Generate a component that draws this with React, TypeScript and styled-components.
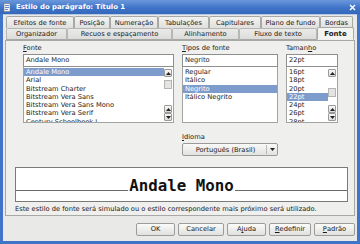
import styled, { createGlobalStyle } from 'styled-components'

const GlobalStyle = createGlobalStyle`
  html, body {
    margin: 0;
    padding: 0;
    background: #ffffff;
  }
  body {
    font-family: "DejaVu Sans", "Liberation Sans", sans-serif;
    font-size: 6.7px;
    color: #1a1a1a;
  }
`

const topTabs = [
  { label: 'Efeitos de fonte', width: 68 },
  { label: 'Posição', width: 36 },
  { label: 'Numeração', width: 48 },
  { label: 'Tabulações', width: 51 },
  { label: 'Capitulares', width: 52 },
  { label: 'Plano de fundo', width: 59 },
  { label: 'Bordas', width: 33 },
]

const bottomTabs = [
  { label: 'Organizador', width: 61 },
  { label: 'Recuos e espaçamento', width: 105 },
  { label: 'Alinhamento', width: 67 },
  { label: 'Fluxo de texto', width: 78 },
  { label: 'Fonte', width: 37, active: true },
]

const fonts = [
  'Andale Mono',
  'Arial',
  'Bitstream Charter',
  'Bitstream Vera Sans',
  'Bitstream Vera Sans Mono',
  'Bitstream Vera Serif',
  'Century Schoolbook L',
]

const styles = ['Regular', 'Itálico', 'Negrito', 'Itálico Negrito']

const sizes = ['16pt', '18pt', '20pt', '22pt', '24pt', '26pt', '28pt']

const Arrow = ({ up }: { up?: boolean }) => (
  <svg width="5" height="3" viewBox="0 0 5 3">
    <path d={up ? 'M0 3 L2.5 0 L5 3 Z' : 'M0 0 L2.5 3 L5 0 Z'} fill="#222" />
  </svg>
)

type ListProps = {
  items: string[]
  selected: number
  scroll?: boolean
  thumbTop?: number
}

const ListBox = ({ items, selected, scroll, thumbTop = 0 }: ListProps) => (
  <List>
    <Rows>
      {items.map((item, i) => (
        <Row key={item} $selected={i === selected}>{item}</Row>
      ))}
    </Rows>
    {scroll && (
      <ScrollBar>
        <ScrollButton><Arrow up /></ScrollButton>
        <Track>
          <Thumb style={{ marginTop: thumbTop }} />
        </Track>
        <ScrollButton><Arrow up /></ScrollButton>
        <ScrollButton><Arrow /></ScrollButton>
      </ScrollBar>
    )}
  </List>
)

const Mn = ({ children }: { children: string }) => <u>{children}</u>

const App = () => {
  return (
    <>
      <GlobalStyle />
      <Window>
        <TitleBar>
          <TitleIcon>
            <svg width="9" height="9" viewBox="0 0 9 9">
              <rect x="1" y="0.5" width="6" height="8" fill="#f4f4f4" stroke="#7a7a7a" strokeWidth="0.6" />
              <rect x="2" y="2" width="4" height="0.8" fill="#3d6fc4" />
              <rect x="2" y="4" width="4" height="0.8" fill="#3d6fc4" />
              <rect x="2" y="6" width="3" height="0.8" fill="#3d6fc4" />
            </svg>
          </TitleIcon>
          <Title>Estilo do parágrafo: Título 1</Title>
          <CloseBox>
            <svg width="7" height="7" viewBox="0 0 7 7">
              <path d="M1 1 L6 6 M6 1 L1 6" stroke="#ffffff" strokeWidth="1.4" />
            </svg>
          </CloseBox>
        </TitleBar>

        <Body>
          <TabRow>
            {topTabs.map(t => (
              <Tab key={t.label} $width={t.width}>{t.label}</Tab>
            ))}
          </TabRow>
          <TabRow>
            {bottomTabs.map(t => (
              <LowerTab key={t.label} $width={t.width} $active={t.active}>{t.label}</LowerTab>
            ))}
          </TabRow>

          <Panel>
            <Columns>
              <Column>
                <Label><Mn>F</Mn>onte</Label>
                <Input>Andale Mono</Input>
                <ListBox items={fonts} selected={0} scroll thumbTop={3} />
              </Column>
              <Column>
                <Label><Mn>T</Mn>ipos de fonte</Label>
                <Input>Negrito</Input>
                <ListBox items={styles} selected={2} />
              </Column>
              <Column>
                <Label>Taman<Mn>h</Mn>o</Label>
                <Input>22pt</Input>
                <ListBox items={sizes} selected={3} scroll thumbTop={11} />
              </Column>
            </Columns>

            <LanguageRow>
              <Label><Mn>I</Mn>dioma</Label>
              <Select>
                <SelectText>Português (Brasil)</SelectText>
                <SelectArrow><Arrow /></SelectArrow>
              </Select>
            </LanguageRow>

            <Preview>
              <Line />
              <PreviewText>Andale Mono</PreviewText>
              <Line />
            </Preview>

            <Note>Este estilo de fonte será simulado ou o estilo correspondente mais próximo será utilizado.</Note>
          </Panel>

          <ButtonRow>
            <Button $width={39}>OK</Button>
            <Button $width={46}>Cancelar</Button>
            <Button $width={39}>A<Mn>j</Mn>uda</Button>
            <Button $width={42}><Mn>R</Mn>edefinir</Button>
            <Button $width={41}><Mn>P</Mn>adrão</Button>
          </ButtonRow>
        </Body>
      </Window>
    </>
  )
}

export default App

const Window = styled.div`
  width: 360px;
  height: 244px;
  box-sizing: border-box;
  display: flex;
  flex-direction: column;
  background: #3f74c8;
  padding: 0 3px 3px 3px;
`

const TitleBar = styled.div`
  height: 14px;
  margin: 0 -3px;
  padding: 0 4px 0 3px;
  display: flex;
  align-items: center;
  gap: 4px;
  background: linear-gradient(#6b98dc, #3f74c8 55%, #3468bb);
`

const TitleIcon = styled.div`
  width: 9px;
  height: 9px;
  display: flex;
`

const Title = styled.div`
  flex: 1;
  color: #ffffff;
  font-weight: bold;
  font-size: 6.9px;
`

const CloseBox = styled.div`
  width: 8px;
  height: 8px;
  display: flex;
  align-items: center;
  justify-content: center;
`

const Body = styled.div`
  flex: 1;
  display: flex;
  flex-direction: column;
  background: #e9e9e7;
  padding: 1px 2px 0 2px;
  border-top: 1px solid #b8c8e4;
`

const TabRow = styled.div`
  display: flex;
  height: 12px;
  padding-left: 1px;
  position: relative;
  z-index: 1;
`

const Tab = styled.div<{ $width: number }>`
  width: ${p => p.$width}px;
  box-sizing: border-box;
  display: flex;
  align-items: center;
  justify-content: center;
  border: 1px solid #a8a8a6;
  border-bottom: none;
  border-radius: 2px 2px 0 0;
  background: linear-gradient(#f2f2f0, #e0e0de);
  white-space: nowrap;
`

const LowerTab = styled.div<{ $width: number; $active?: boolean }>`
  width: ${p => p.$width}px;
  box-sizing: border-box;
  display: flex;
  align-items: center;
  justify-content: center;
  white-space: nowrap;
  border: 1px solid ${p => (p.$active ? '#a8a8a6' : '#b6b6b4')};
  border-bottom: ${p => (p.$active ? '1px solid #efefed' : '1px solid #a8a8a6')};
  border-radius: 2px 2px 0 0;
  background: ${p => (p.$active ? '#f3f3f1' : 'linear-gradient(#eaeae8, #dcdcda)')};
  font-weight: ${p => (p.$active ? 'bold' : 'normal')};
  font-size: ${p => (p.$active ? '7px' : '6.7px')};
  margin-bottom: ${p => (p.$active ? '-1px' : '0')};
  height: ${p => (p.$active ? '13px' : '12px')};
  margin-top: ${p => (p.$active ? '-1px' : '0')};
`

const Panel = styled.div`
  height: 176px;
  box-sizing: border-box;
  background: #efefed;
  border: 1px solid #a8a8a6;
  padding: 3px 9px 0 9px;
  display: flex;
  flex-direction: column;
`

const Columns = styled.div`
  display: grid;
  grid-template-columns: 151px 96px 52px;
  column-gap: 8px;
  padding-left: 8px;
`

const Column = styled.div`
  display: flex;
  flex-direction: column;
`

const Label = styled.div`
  height: 9px;
  line-height: 9px;
  u {
    text-decoration-thickness: 0.5px;
    text-underline-offset: 1px;
  }
`

const Input = styled.div`
  height: 13px;
  box-sizing: border-box;
  border: 1px solid #8e8e8c;
  background: #ffffff;
  padding: 0 2px;
  line-height: 11px;
  margin-top: 1px;
`

const List = styled.div`
  height: 56px;
  box-sizing: border-box;
  border: 1px solid #a2a2a0;
  border-top: none;
  background: #ffffff;
  display: flex;
  overflow: hidden;
`

const Rows = styled.div`
  flex: 1;
  display: flex;
  flex-direction: column;
  padding-top: 1px;
`

const Row = styled.div<{ $selected?: boolean }>`
  height: 8.3px;
  line-height: 8.3px;
  flex-shrink: 0;
  padding: 0 2px;
  white-space: nowrap;
  background: ${p => (p.$selected ? '#7d9ccb' : 'transparent')};
  color: ${p => (p.$selected ? '#ffffff' : '#1a1a1a')};
`

const ScrollBar = styled.div`
  width: 9px;
  display: flex;
  flex-direction: column;
  background: #ffffff;
  padding: 2px 0 1px 0;
  box-sizing: border-box;
`

const ScrollButton = styled.div`
  width: 8px;
  height: 8px;
  box-sizing: border-box;
  border: 1px solid #9a9a98;
  border-radius: 1px;
  background: linear-gradient(#f8f8f6, #dcdcda);
  display: flex;
  align-items: center;
  justify-content: center;
`

const Track = styled.div`
  flex: 1;
  display: flex;
  flex-direction: column;
`

const Thumb = styled.div`
  width: 8px;
  height: 9px;
  box-sizing: border-box;
  border: 1px solid #b4b4b2;
  background: #e4e4e2;
`

const LanguageRow = styled.div`
  display: flex;
  flex-direction: column;
  margin: 10px 0 0 167px;
  width: 96px;
`

const Select = styled.div`
  height: 13px;
  margin-top: 1px;
  box-sizing: border-box;
  border: 1px solid #9a9a98;
  border-radius: 2px;
  background: linear-gradient(#f9f9f7, #e2e2e0);
  display: flex;
  align-items: center;
`

const SelectText = styled.div`
  flex: 1;
  text-align: center;
  padding-left: 2px;
`

const SelectArrow = styled.div`
  width: 10px;
  height: 9px;
  border-left: 1px solid #b8b8b6;
  display: flex;
  align-items: center;
  justify-content: center;
`

const Preview = styled.div`
  margin: 11px 0 0 0;
  width: 333px;
  height: 35px;
  box-sizing: border-box;
  border: 1px solid #7a7a78;
  background: #ffffff;
  display: flex;
  align-items: baseline;
  padding: 9px 0 0 0;
`

const Line = styled.div`
  flex: 1;
  height: 1px;
  background: #6a6a68;
`

const PreviewText = styled.div`
  font-family: "DejaVu Sans Mono", "Liberation Mono", monospace;
  font-weight: bold;
  font-size: 15.8px;
  line-height: 18px;
  color: #111111;
  padding: 0 1px;
`

const Note = styled.div`
  margin-top: 3px;
  line-height: 8px;
  white-space: nowrap;
`

const ButtonRow = styled.div`
  flex: 1;
  display: flex;
  justify-content: flex-end;
  align-items: center;
  gap: 3px;
  padding: 1px 0 0 0;
`

const Button = styled.div<{ $width: number }>`
  width: ${p => p.$width}px;
  height: 13px;
  box-sizing: border-box;
  border: 1px solid #9c9c9a;
  border-radius: 2px;
  background: linear-gradient(#fbfbf9, #e0e0de);
  display: flex;
  align-items: center;
  justify-content: center;
  u {
    text-decoration-thickness: 0.5px;
    text-underline-offset: 1px;
  }
`
